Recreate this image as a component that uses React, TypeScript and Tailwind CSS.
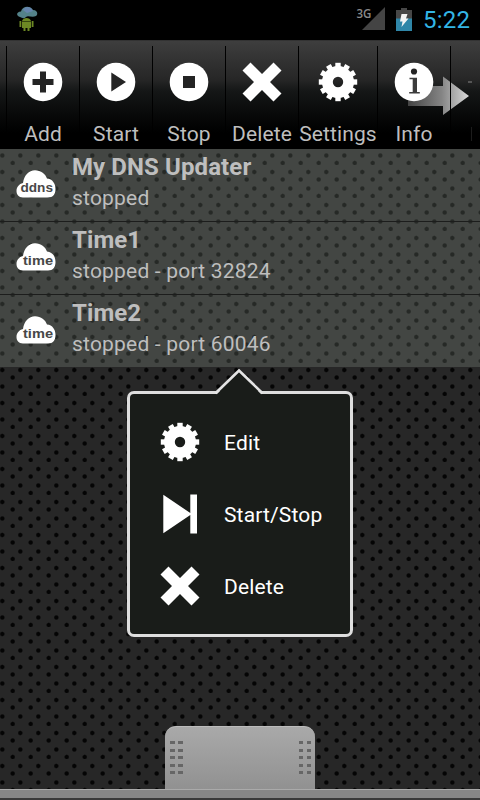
import React from 'react';

interface IconProps {
  className?: string;
}

const DOTS =
  'bg-[radial-gradient(circle_at_2.3px_7px,#040404_1.5px,transparent_2.8px),radial-gradient(circle_at_12.7px_14.5px,#040404_1.5px,transparent_2.8px),radial-gradient(circle_at_2.3px_23.5px,#040404_1.5px,transparent_2.8px),radial-gradient(circle_at_12.7px_31px,#040404_1.5px,transparent_2.8px),radial-gradient(circle_at_20.3px_7px,#040404_1.5px,transparent_2.8px),radial-gradient(circle_at_20.3px_23.5px,#040404_1.5px,transparent_2.8px)] bg-[length:18px_33px]';

const AddIcon = () => (
  <svg viewBox="0 0 40 40" className="size-10">
    <circle cx="20" cy="20" r="19.3" fill="#fff" />
    <path d="M17 9.5h6V17h7.5v6H23v7.5h-6V23H9.5v-6H17z" fill="#242424" />
  </svg>
);

const PlayIcon = () => (
  <svg viewBox="0 0 40 40" className="size-10">
    <circle cx="20" cy="20" r="19.3" fill="#fff" />
    <path d="M15.3 10.5v19L30 20z" fill="#242424" />
  </svg>
);

const StopIcon = () => (
  <svg viewBox="0 0 40 40" className="size-10">
    <circle cx="20" cy="20" r="19.3" fill="#fff" />
    <path d="M14 14h12v12H14z" fill="#242424" />
  </svg>
);

const CrossIcon = () => (
  <svg viewBox="0 0 40 40" className="size-10">
    <path d="M8.5.5 20 12 31.5.5l8 8L28 20l11.5 11.5-8 8L20 28 8.5 39.5l-8-8L12 20 .5 8.5z" fill="#fff" />
  </svg>
);

const TEETH = [0, 30, 60, 90, 120, 150, 180, 210, 240, 270, 300, 330];

const GearIcon = () => (
  <svg viewBox="0 0 40 40" className="size-10">
    <circle cx="20" cy="20" r="10.6" fill="none" stroke="#fff" strokeWidth="10.8" />
    {TEETH.map((a) => (
      <path key={a} d="M17.3.8h5.4V7h-5.4z" fill="#fff" transform={`rotate(${a} 20 20)`} />
    ))}
  </svg>
);

const InfoIcon = () => (
  <svg viewBox="0 0 40 40" className="size-10">
    <circle cx="20" cy="20" r="19.3" fill="#fff" />
    <circle cx="20" cy="9.5" r="3.1" fill="#242424" />
    <path d="M15.5 15.7H23V30h2.8v1.6H15.200V30h3.500V17.3h-3.200z" fill="#3c3c3c" />
  </svg>
);

const SkipIcon = () => (
  <svg viewBox="0 0 40 40" className="size-10">
    <path d="M3.3.8v38.5L30.3 21v18.5H37V.5h-6.7v18.5z" fill="#fff" />
  </svg>
);

const ArrowIcon = ({ className }: IconProps) => (
  <svg viewBox="0 0 66 42" className={className}>
    <defs>
      <linearGradient id="arrow" x1="0" x2="1" y1="0" y2="0">
        <stop offset="0" stopColor="#444" />
        <stop offset=".55" stopColor="#848484" />
        <stop offset="1" stopColor="#dadada" />
      </linearGradient>
    </defs>
    <path d="M1 11h35V1.5L62 21 36 40V31H1z" fill="url(#arrow)" />
    <path d="M61 6h4v2h-4z" fill="#555" />
  </svg>
);

const CloudIcon = ({ label }: { label: string }) => (
  <svg viewBox="0 0 40 30" className="h-[30px] w-10">
    <path d="M7 28.5C2.5 28.5.5 25.5.5 22c0-4 2.5-7 6.500-8C8 6 13 1.200 19 1.200c6 0 10.500 3.800 12 8.300 5.500.5 8.500 5 8.500 10.500 0 5-2.500 8.500-7.500 8.500z" fill="#fff" />
    <text
      x={label === 'ddns' ? 4.5 : 7}
      y="22.9"
      fontFamily="'Liberation Sans', sans-serif"
      fontWeight="bold"
      fontSize="13.5"
      textLength={label === 'ddns' ? 32.5 : 30}
      lengthAdjust="spacingAndGlyphs"
      fill="#484848"
    >
      {label}
    </text>
  </svg>
);

const StatusBar = () => (
  <header className="flex h-10 items-center justify-between bg-black pl-4 pr-2.5">
    <svg viewBox="0 0 24 28" className="h-7 w-6">
      <path d="M4 11C0 10 0 6 5 5.5 6 0 14-1 17 4c5 0 5 5 3 6-4 2-8-1-10 1s-4 1-6 0z" fill="#54828a" />
      <path d="M7 4c2-4 8-4 10 1L11 7z" fill="#6685ad" />
      <path d="M6 15c1-4 8-4 9 0v7H6zM3.5 15h1.8v6H3.5zM15.7 15h1.8v6h-1.8zM7.5 22h2v3h-2zM11.5 22h2v3h-2z" fill="#6c8824" />
      <path d="M6 15.5h9" stroke="#35470f" />
    </svg>
    <div className="flex items-center">
      <svg viewBox="0 -6 30 32" className="-mt-1.5 h-8 w-[30px] overflow-visible">
        <path d="M30 0v23H7z" fill="#444" />
        <text x="1.5" y="10.500" fontFamily="'Open Sans', sans-serif" fontWeight="600" fontSize="13" textLength="15" lengthAdjust="spacingAndGlyphs" fill="#8a8a8a">3G</text>
      </svg>
      <svg viewBox="0 0 16 24" className="ml-[11px] h-6 w-4">
        <path d="M5 0h6v2h5v9H0V2h5z" fill="#474747" />
        <path d="M0 10.5h16V23H0z" fill="#2f86a8" />
        <path d="M5.5 6h6L10 10.5h2.5L5.5 19l1-5.5H4z" fill="#f4f4f4" />
      </svg>
      <span className="ml-[11px] w-[47px] text-[24px] leading-10 tracking-[0.2px] text-[#33b5e5]">5:22</span>
    </div>
  </header>
);

const tools = [
  { label: 'Add', icon: <AddIcon />, width: 'w-[73px]' },
  { label: 'Start', icon: <PlayIcon />, width: 'w-[73px]' },
  { label: 'Stop', icon: <StopIcon />, width: 'w-[73px]' },
  { label: 'Delete', icon: <CrossIcon />, width: 'w-[73px]' },
  { label: 'Settings', icon: <GearIcon />, width: 'w-[79px]' },
  { label: 'Info', icon: <InfoIcon />, width: 'w-[73px]' },
];

const Toolbar = () => (
  <nav className="relative flex h-[109px] border-t border-[#333] bg-[linear-gradient(to_bottom,#3e3e3e_0%,#262626_36%,#151717_46%,#080909_68%,#000_85%)] pl-1.5 pt-[5px]">
    <ArrowIcon className="absolute left-[407px] top-[34px] h-[42px] w-[66px]" />
    {tools.map((tool) => (
      <div key={tool.label} className={`${tool.width} relative flex shrink-0 flex-col items-center border-l border-black pt-4`}>
        {tool.icon}
        <span className="mt-5 text-[21px] leading-6 tracking-[0.1px] text-[#bebebe]">{tool.label}</span>
      </div>
    ))}
    <div className="relative flex flex-1 items-end border-l border-black pb-2 pl-5">
      <span className="h-3.5 w-px bg-[#1c1c1c]" />
    </div>
  </nav>
);

const services = [
  { name: 'My DNS Updater', status: 'stopped', type: 'ddns' },
  { name: 'Time1', status: 'stopped - port 32824', type: 'time' },
  { name: 'Time2', status: 'stopped - port 60046', type: 'time' },
];

const ServiceList = () => (
  <ul className="bg-[#d0dfcd]/17">
    {services.map((service) => (
      <li key={service.name} className="flex h-[73px] border-b border-[#1c1d1c] pl-4 pt-5 last:h-[72px] last:border-b-0">
        <CloudIcon label={service.type} />
        <div className="-mt-4 ml-4 text-[#bebebe]">
          <h2 className="text-[24px] font-bold leading-7 tracking-[0.1px]">{service.name}</h2>
          <p className="mt-[5px] text-[21px] leading-6 tracking-[0.2px]">{service.status}</p>
        </div>
      </li>
    ))}
  </ul>
);

const actions = [
  { label: 'Edit', icon: <GearIcon /> },
  { label: 'Start/Stop', icon: <SkipIcon /> },
  { label: 'Delete', icon: <CrossIcon /> },
];

const ActionPopup = () => (
  <div className="absolute left-[127px] top-[391px] h-[246px] w-[226px] rounded-[7px] border-[3px] border-[#dedede] bg-[#191c19] pl-[30px] pt-3">
    <svg viewBox="0 0 50 26" className="absolute left-[83.5px] top-[-25px] h-[26px] w-[50px]">
      <path d="M2 26 25 3l23 23z" fill="#191c19" />
      <path d="M1.5 24.2 25 1.5l23.5 22.7" fill="none" stroke="#e4e4e4" strokeWidth="2.6" />
    </svg>
    {actions.map((action) => (
      <button key={action.label} className="flex h-[72px] items-center text-[21px] tracking-[0.15px] text-white">
        {action.icon}
        <span className="ml-6 pt-[3px]">{action.label}</span>
      </button>
    ))}
  </div>
);

const Grip = () => (
  <div className="grid h-fit grid-cols-2 gap-x-[3.5px] gap-y-[4.5px]">
    {Array.from({ length: 10 }, (_, i) => (
      <span key={i} className="h-[3px] w-[4.5px] bg-[#666]" />
    ))}
  </div>
);

const Drawer = () => (
  <footer className="mt-auto flex flex-col items-center">
    <div className="flex h-[63px] w-[150px] justify-between rounded-t-[11px] border-t border-[#bcbcbc] bg-linear-to-b from-[#a9a9a9] to-[#919191] pl-[5px] pr-1 pt-[14px]">
      <Grip />
      <Grip />
    </div>
    <div className="h-[11px] w-full border-b-2 border-t border-b-[#3a3a3a] border-t-[#aaa] bg-[#878787]" />
  </footer>
);

const App = () => {
  return (
    <div className={`relative flex h-[800px] w-[480px] flex-col overflow-hidden bg-[#272727] font-[Roboto,sans-serif] ${DOTS}`}>
      <StatusBar />
      <Toolbar />
      <ServiceList />
      <ActionPopup />
      <Drawer />
    </div>
  );
};

export default App;
